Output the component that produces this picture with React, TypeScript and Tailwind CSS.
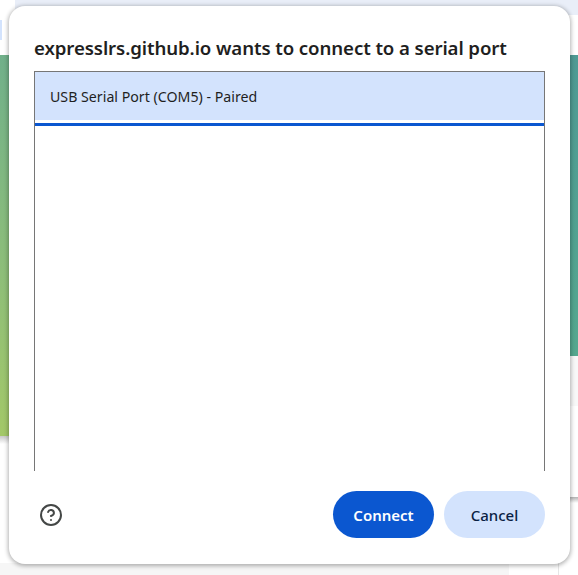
import { CircleHelp } from "lucide-react";

const App = () => {
  return (
    <div className="relative flex h-[575px] w-[578px] flex-col overflow-hidden bg-white font-['Noto_Sans','Open_Sans',sans-serif]">
      {/* page behind the dialog */}
      <div className="flex h-[15px] shrink-0">
        <div className="w-[15px]" />
        <div className="flex-1 bg-[#e9eef8]" />
      </div>
      <div className="flex flex-1">
        <div className="flex w-[20px] flex-col">
          <div className="mt-[5px] h-[20px] w-[2px] bg-[#d3e3fd]" />
          <div className="mt-[15px] h-[381px] bg-gradient-to-b from-[#70b08a] to-[#a3c868]" />
          <div className="h-[8px] bg-gradient-to-b from-[#c8c8c8] to-white" />
          <div className="mt-auto h-[12px] bg-[#f6f6f6]" />
        </div>
        <div className="flex flex-1 flex-col justify-end">
          <div className="flex h-[12px]">
            <div className="w-[490px] bg-[#f6f6f6]" />
            <div className="ml-[49px] w-px bg-[#e6e6e6]" />
          </div>
        </div>
        <div className="flex w-[20px] flex-col">
          <div className="mt-[40px] h-[301px] bg-gradient-to-b from-[#4f9a94] to-[#55a88f]" />
          <div className="h-[50px] bg-[#f8f8f8]" />
          <div className="mt-[91px] h-[6px] bg-gradient-to-b from-[#b4b4b4] to-white" />
        </div>
      </div>

      {/* serial port dialog */}
      <div className="absolute left-[9px] top-[6px] flex h-[558px] w-[561px] flex-col rounded-[16px] bg-white px-[25px] pt-[28px] shadow-[0_1px_4px_1px_rgba(0,0,0,0.3)]">
        <h1 className="text-[18.65px] font-semibold leading-[28px] tracking-[-0.1px] text-[#1f1f1f]">
          expresslrs.github.io wants to connect to a serial port
        </h1>
        <div className="mt-[9px] h-[400px] border border-b-0 border-[#767676]">
          <div className="flex h-[48px] items-center bg-[#d3e3fd] pl-[15px] pt-[2px] text-[14.2px] text-[#1f1f1f]">
            USB Serial Port (COM5) - Paired
          </div>
          <div className="mt-[3px] h-[3px] bg-[#0b57d0]" />
        </div>
        <div className="mt-[20px] flex items-center justify-between">
          <CircleHelp className="ml-[5px] h-[24px] w-[24px] text-[#444746]" strokeWidth={2} />
          <div className="flex gap-[10px]">
            <button className="h-[47px] w-[101px] rounded-full bg-[#0b57d0] pt-[2px] text-[15px] font-semibold text-white">
              Connect
            </button>
            <button className="h-[47px] w-[101px] rounded-full bg-[#d3e3fd] pt-[2px] text-[15px] font-medium text-[#0a1f44]">
              Cancel
            </button>
          </div>
        </div>
      </div>
    </div>
  );
};

export default App;
